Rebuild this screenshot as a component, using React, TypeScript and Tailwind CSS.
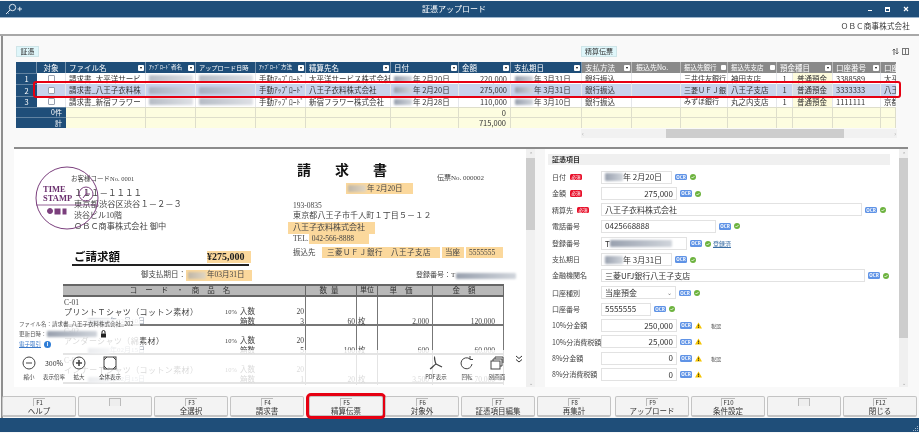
import React from "react";

const Red = ({ className = "" }: { className?: string }) => (
  <span className={`inline-block shrink-0 rounded-[1px] bg-gradient-to-r from-gray-400 to-gray-300 blur-[1.2px] ${className}`} />
);

const H = ({ t, gray, span, small }: { t: string; gray?: boolean; span?: boolean; small?: boolean }) => (
  <div className={`flex items-center justify-between pl-[3px] pr-[1px] border-r border-white/40 overflow-hidden whitespace-nowrap text-white ${gray ? "bg-[#8a8a8a]" : "bg-[#1f4e79]"} ${span ? "col-span-2" : ""} ${small ? "text-[5.5px]" : "text-[7.5px]"}`}>
    <span>{t}</span>
    <span className="shrink-0 w-[6px] h-[6px] bg-white rounded-[1px] flex items-center justify-center">
      <span className="w-0 h-0 border-x-[1.5px] border-x-transparent border-t-[2px] border-t-black" />
    </span>
  </div>
);

type Row = { n: string; file: string; name: string; d: string; amt: string; due: string; bank: string; br: string; ac: string; ex: string };
const rows: Row[] = [
  { n: "1", file: "請求書_太平洋サービ", name: "太平洋サービス株式会社", d: "年  2月20日", amt: "220,000", due: "年  3月31日", bank: "三井住友銀行", br: "神田支店", ac: "3388589", ex: "太平" },
  { n: "2", file: "請求書_八王子衣料株", name: "八王子衣料株式会社", d: "年  2月20日", amt: "275,000", due: "年  3月31日", bank: "三菱ＵＦＪ銀", br: "八王子支店", ac: "3333333", ex: "八王" },
  { n: "3", file: "請求書_新宿フラワー", name: "新宿フラワー株式会社", d: "年  2月28日", amt: "110,000", due: "年  3月10日", bank: "みずほ銀行", br: "丸之内支店", ac: "1111111", ex: "京都" },
];

function DataGrid() {
  const cell = "flex items-center px-[3px] overflow-hidden whitespace-nowrap text-[7.5px] text-[#333] border-r border-gray-200";
  return (
    <div className="ml-[13px] mt-[5px] w-[880px] grid grid-cols-[21px_29px_80px_50px_60px_50px_85px_68px_52px_71px_50px_49px_47px_49px_16px_40px_48px_15px] grid-rows-[11px_11px_12px_11px_10px_11px]">
      <div className="bg-[#1f4e79] border-r border-white/40" />
      <div className="bg-[#1f4e79] text-white text-[7.5px] flex items-center justify-center border-r border-white/40">対象</div>
      <H t="ファイル名" />
      <H t="ｱｯﾌﾟﾛｰﾄﾞ者名" small />
      <div className="flex items-center justify-between pl-[3px] pr-[1px] border-r border-white/40 overflow-hidden whitespace-nowrap text-white bg-[#1f4e79] text-[6.2px]">
        <span>アップロード日時</span>
      </div>
      <H t="ｱｯﾌﾟﾛｰﾄﾞ方法" small />
      <H t="精算先名" />
      <H t="日付" />
      <H t="金額" />
      <H t="支払期日" />
      <H t="支払方法" gray />
      <div className="bg-[#8a8a8a] text-white text-[7px] flex items-center pl-[4px] border-r border-white/40">振込先No.</div>
      <div className="bg-[#8a8a8a] text-white text-[6.5px] flex items-center justify-between pl-[3px] pr-[1px] border-r border-white/40 whitespace-nowrap overflow-hidden"><span>振込先銀行</span><span className="shrink-0 w-[5px] h-[5px] bg-white rounded-[1px]" /></div>
      <div className="bg-[#8a8a8a] text-white text-[6.5px] flex items-center justify-between pl-[3px] pr-[1px] border-r border-white/40 whitespace-nowrap overflow-hidden"><span>振込先支店</span><span className="shrink-0 w-[5px] h-[5px] bg-white rounded-[1px]" /></div>
      <H t="預金種目" gray span />
      <H t="口座番号" gray />
      <div className="bg-[#8a8a8a] text-white text-[7.5px] flex items-center pl-[3px] overflow-hidden whitespace-nowrap">口座</div>
      {rows.map((r) => {
        const sel = r.n === "2";
        const bg = sel ? "bg-[#c8d3ec]" : "bg-white";
        return (
          <React.Fragment key={r.n}>
            <div className="bg-[#1f4e79] text-white text-[7.5px] flex items-center justify-center border-t border-white/30">{r.n}</div>
            <div className={`${bg} flex items-center justify-center border-r border-gray-200`}>
              <span className="w-[7px] h-[7px] bg-white border border-gray-400 rounded-[1px]" />
            </div>
            <div className={`${cell} ${bg}`}>{r.file}</div>
            <div className={`${cell} ${bg}`}><Red className="w-[44px] h-[7px] opacity-70" /></div>
            <div className={`${cell} ${bg}`}><Red className="w-[54px] h-[7px] opacity-70" /></div>
            <div className={`${cell} ${bg} text-[6.5px]`}>手動ｱｯﾌﾟﾛｰﾄﾞ</div>
            <div className={`${cell} ${bg}`}>{r.name}</div>
            <div className={`${cell} ${bg}`}><Red className="w-[18px] h-[6px] mr-[1px]" />{r.d}</div>
            <div className={`${cell} ${bg} justify-end`}>{r.amt}</div>
            <div className={`${cell} ${bg}`}><Red className="w-[18px] h-[6px] ml-[1px] mr-[1px]" />{r.due}</div>
            <div className={`${cell} ${bg}`}>銀行振込</div>
            <div className={`${cell} ${bg}`} />
            <div className={`${cell} ${bg} px-[2px] text-[7px]`}>{r.bank}</div>
            <div className={`${cell} ${bg}`}>{r.br}</div>
            <div className={`${cell} ${bg} justify-center`}>1</div>
            <div className={`${cell} ${sel ? "bg-[#d5dbe4]" : "bg-[#fdfbdc]"} pl-[4px]`}>普通預金</div>
            <div className={`${cell} ${bg}`}>{r.ac}</div>
            <div className={`${cell} ${bg} border-r-0 px-[1px]`}>{r.ex}</div>
          </React.Fragment>
        );
      })}
      {[["0件", "0"], ["計", "715,000"]].map(([l, v]) => (
        <div key={l} className="contents">
          <div className="col-span-2 bg-[#1f4e79] text-white text-[7px] flex items-center justify-end pr-[4px] border-t border-white/30">{l}</div>
          {Array.from({ length: 16 }).map((_, i) => (
            <div key={i} className="bg-[#fdfde0] border-r border-t border-[#dedecb] text-[7.5px] text-[#333] flex items-center justify-end pr-[4px]">
              {i === 6 ? v : ""}
            </div>
          ))}
        </div>
      ))}
    </div>
  );
}

const Hl = ({ children, className = "" }: { children?: React.ReactNode; className?: string }) => (
  <div className={`flex items-center bg-[#fbd89c] whitespace-nowrap ${className}`}>{children}</div>
);

const mincho = "font-['Liberation_Serif','Noto_Sans_CJK_JP',serif]";

function TRow({ code, name, date, n1, n2, qty, price, amt }: { code: string; name: string; date: string; n1: string; n2: string; qty: string; price: string; amt: string }) {
  return (
    <div className="grid grid-cols-[242px_51px_21px_55px_72px] h-[29px] border-b-2 border-[#777] text-[7.5px] leading-[9.7px] text-[#444]">
      <div className="relative pl-[1px] pt-[1px] flex flex-col">
        <span>{code}</span>
        <span className="text-[8px] tracking-[0.4px] whitespace-nowrap">{name}</span>
        <span className="text-[7px] pl-[24px] text-gray-400 flex items-center"><Red className="w-[22px] h-[6px]" />{date}</span>
        <span className="absolute left-[162px] top-[10px] text-[6.5px]">10%</span>
        <span className="absolute left-[177px] top-[10px]">入数</span>
        <span className="absolute left-[177px] top-[19.5px]">箱数</span>
        <span className="absolute right-[1px] top-[10px]">{n1}</span>
        <span className="absolute right-[1px] top-[19.5px]">{n2}</span>
      </div>
      <div className="border-l border-[#777] flex items-end justify-end pr-[1px]">{qty}</div>
      <div className="border-l border-[#777] flex items-end pl-[1px]">枚</div>
      <div className="border-l border-[#777] flex items-end justify-end pr-[3px]">{price}</div>
      <div className="border-l border-[#777] border-r flex items-end justify-end pr-[8px]">{amt}</div>
    </div>
  );
}

const Icon = ({ children, w = 14 }: { children: React.ReactNode; w?: number }) => (
  <svg width={w} height={14} viewBox="0 0 14 14" fill="none" stroke="#444" strokeWidth="1">{children}</svg>
);

function Doc() {
  return (
    <div className={`relative bg-white w-[512px] h-[238px] overflow-hidden text-[#444] ${mincho}`}>
      {/* stamp */}
      <div className="absolute left-[21px] top-[16px] w-[66px] h-[66px]">
        <svg width="66" height="66" viewBox="0 0 66 66" fill="none" stroke="#7b3f7d">
          <circle cx="32" cy="33" r="31" strokeWidth="1" />
          <line x1="1" y1="40" x2="63" y2="40" strokeWidth="0.8" />
          <circle cx="51" cy="29" r="7" strokeWidth="1" />
          <path d="M51 24v5l-3 4M51 29h4" strokeWidth="1" />
          <circle cx="15" cy="46" r="2.5" fill="#7b3f7d" />
          <rect x="20" y="44" width="5" height="5" fill="#7b3f7d" />
          <rect x="28" y="44" width="3" height="5" fill="#7b3f7d" />
        </svg>
        <div className="absolute left-[8px] top-[20px] text-[8.5px] leading-[8.5px] font-bold text-[#6a2f6d] font-['Liberation_Serif',serif]">TIME<br />STAMP</div>
      </div>

      {/* address + title */}
      <div className="flex h-[135px] leading-none">
        <div className="w-[274px] pl-[60px] shrink-0">
          <div className="text-[6.5px] -ml-[3px] mt-[25px] h-[10px] leading-[10px] whitespace-nowrap">お客様コードNo. 0001</div>
          <div className="text-[8.5px] leading-[11px] mt-[4px] whitespace-nowrap">１１１－１１１１</div>
          <div className="text-[8.3px] leading-[11px] whitespace-nowrap">東京都渋谷区渋谷１－２－３</div>
          <div className="text-[8px] leading-[11px]">渋谷ビル10階</div>
          <div className="text-[8.2px] leading-[11px] whitespace-nowrap">ＯＢＣ商事株式会社 御中</div>
          <div className="flex items-center justify-between w-[177px] -ml-[2px] pl-[2px] mt-[18px] h-[16px] border-b-2 border-[#222]">
            <span className="text-[11.5px] font-bold text-[#111] font-['Noto_Sans_CJK_JP',sans-serif]">ご請求額</span>
            <Hl className="h-[12px] w-[44px] -mr-[2px] text-[10px] font-bold text-[#222]">¥275,000</Hl>
          </div>
          <div className="flex justify-end items-center h-[12px] mt-[3px] w-[178px] text-[7.5px]">
            <span className="whitespace-nowrap">御支払期日：</span>
            <Hl className="w-[66px] h-[11px] pl-[2px] shrink-0"><Red className="w-[18px] h-[7px] mr-[1px] opacity-60" />年03月31日</Hl>
          </div>
        </div>
        <div className="pl-[5px] flex-1">
          <div className="relative h-[34px]">
            <div className="absolute left-[4px] top-[13px] text-[14px] font-bold text-[#111] tracking-[24px] whitespace-nowrap font-['Noto_Sans_CJK_JP',sans-serif]">請求書</div>
            <div className="absolute left-[144px] top-[26px] text-[7px] whitespace-nowrap">伝票No. 000002</div>
          </div>
          <Hl className="ml-[53px] w-[67px] h-[11px] text-[7.5px] pl-[2px]"><Red className="w-[18px] h-[7px] mr-[1px] opacity-60" />年 2月20日</Hl>
          <div className="text-[7.5px] leading-[10px] mt-[7px]">193-0835</div>
          <div className="text-[8px] leading-[10px] tracking-[0.15px] whitespace-nowrap">東京都八王子市千人町１丁目５－１２</div>
          <Hl className="-ml-[5px] mt-[1px] w-[87px] h-[12px] text-[8px] pl-[5px]">八王子衣料株式会社</Hl>
          <div className="flex items-center h-[10px] text-[7.5px]">TEL.<Hl className="w-[60px] h-[10px] pl-[3px]">042-566-8888</Hl></div>
          <div className="flex items-center gap-[2px] h-[11px] mt-[3px] text-[7.5px] whitespace-nowrap">
            <span className="w-[27px]">振込先</span>
            <Hl className="w-[118px] h-[11px] pl-[5px] tracking-[0.5px]">三菱ＵＦＪ銀行　八王子支店</Hl>
            <Hl className="w-[22px] h-[11px] pl-[3px]">当座</Hl>
            <Hl className="w-[37px] h-[11px] pl-[3px]">5555555</Hl>
          </div>
          <div className="flex items-center h-[9px] mt-[13px] pl-[123px] text-[7px] whitespace-nowrap">登録番号：T<Red className="w-[60px] h-[6px] ml-[1px]" /></div>
        </div>
      </div>

      {/* table */}
      <div className="ml-[49px] w-[441px]">
        <div className="grid grid-cols-[242px_51px_21px_55px_72px] h-[13px] bg-[#b8b8b8] border-y-2 border-[#666] text-[7.5px] leading-none text-[#333]">
          <div className="flex items-center justify-center tracking-[8px] whitespace-nowrap">コード・商品名</div>
          <div className="flex items-center justify-center border-l border-[#666] tracking-[4px]">数量</div>
          <div className="flex items-center justify-center border-l border-[#666] text-[7px]">単位</div>
          <div className="flex items-center justify-center border-l border-[#666] tracking-[8px]">単価</div>
          <div className="flex items-center justify-center border-x border-[#666] tracking-[8px]">金額</div>
        </div>
        <TRow code="C-01" name="プリントＴシャツ（コットン素材）" date="年02月10日" n1="20" n2="3" qty="60" price="2,000" amt="120,000" />
        <TRow code="C-02" name="アンダーシャツ（綿素材）" date="年02月15日" n1="20" n2="5" qty="100" price="600" amt="60,000" />
        <TRow code="C-03" name="インナーＴシャツ（コットン素材）" date="年02月15日" n1="20" n2="1" qty="20" price="3,500" amt="70,000" />
      </div>

      {/* file info overlay */}
      <div className="absolute left-[2px] top-[170px] w-[124px] h-[31px] bg-white/80 font-['Noto_Sans_CJK_JP',sans-serif] text-[5.5px] text-[#555]">
        <div className="h-[10px] flex items-center whitespace-nowrap pl-[3px]">ファイル名：請求書_八王子衣料株式会社_202</div>
        <div className="h-[10px] flex items-center pl-[3px]">更新日時：<Red className="w-[50px] h-[6px]" />
          <svg width="7" height="8" viewBox="0 0 7 8" className="ml-[3px]"><rect x="1" y="3.5" width="5" height="4" fill="#222" /><path d="M2 3.5V2a1.5 1.5 0 013 0v1.500" fill="none" stroke="#222" /></svg>
        </div>
        <div className="h-[10px] flex items-center pl-[3px]"><span className="text-[#3a78c8] underline">電子取引</span>
          <span className="ml-[3px] w-[7px] h-[7px] rounded-full bg-[#2e7dd6] text-white text-[5.5px] leading-[7px] text-center font-bold">i</span>
        </div>
      </div>

      {/* viewer toolbar overlay */}
      <div className="absolute left-0 right-0 top-[201px] h-[37px] bg-white/80 flex items-start font-['Noto_Sans_CJK_JP',sans-serif] text-[5.5px] leading-[8px] text-[#444]">
        <div className="w-[30px] flex flex-col items-center pt-[6px]">
          <Icon><circle cx="7" cy="7" r="6" /><path d="M4 7h6" /></Icon>
          <span className="mt-[3px]">縮小</span>
        </div>
        <div className="w-[20px] flex flex-col items-center pt-[7px] whitespace-nowrap">
          <span className="text-[7px] leading-[12px] text-[#333]">300%</span>
          <span className="mt-[4px]">表示倍率</span>
        </div>
        <div className="w-[30px] flex flex-col items-center pt-[6px]">
          <Icon><circle cx="7" cy="7" r="6" /><path d="M4 7h6M7 4v6" strokeWidth="1.6" /></Icon>
          <span className="mt-[3px]">拡大</span>
        </div>
        <div className="w-[36px] -ml-[2px] flex flex-col items-center pt-[6px]">
          <Icon><rect x="1" y="1" width="12" height="12" /><path d="M1 4l3-3M10 1l3 3M1 10l3 3M13 10l-3 3" /></Icon>
          <span className="mt-[3px]">全体表示</span>
        </div>
        <div className="flex-1" />
        <div className="w-[32px] flex flex-col items-center pt-[6px]">
          <Icon><path d="M6 1c-1 0 0 5 1 7M1 13c2-1 4-4 6-5M13 11c-2-1-4-2-6-3" strokeWidth="1.3" /></Icon>
          <span className="mt-[3px] whitespace-nowrap">PDF表示</span>
        </div>
        <div className="w-[30px] flex flex-col items-center pt-[6px]">
          <Icon><path d="M12 8a5.500 5.500 0 11-2-5" /><path d="M10 0v3.500h3" /></Icon>
          <span className="mt-[3px]">回転</span>
        </div>
        <div className="w-[30px] flex flex-col items-center pt-[6px]">
          <Icon><rect x="1" y="5" width="9" height="8" /><path d="M3 5V3h9v7h-2M5 3V1h8v6" /></Icon>
          <span className="mt-[3px]">別画面</span>
        </div>
        <div className="w-[14px] pt-[5px] flex justify-center">
          <svg width="8" height="8" viewBox="0 0 8 8" fill="none" stroke="#333" strokeWidth="1"><path d="M1 1l3 2.500L7 1M1 4.500l3 2.500 3-2.500" /></svg>
        </div>
      </div>
    </div>
  );
}

const Scrollbar = ({ thumb }: { thumb: string }) => (
  <div className="w-[9px] h-full shrink-0 bg-[#f0f0f0] flex flex-col items-center">
    <span className="h-[9px] text-[5px] leading-[9px] text-[#999]">⌃</span>
    <div className={`w-full bg-[#cdcdcd] ${thumb}`} />
    <div className="flex-1" />
    <span className="h-[7px] text-[5px] leading-[5px] text-[#999]">⌄</span>
  </div>
);

const Ocr = () => (
  <span className="inline-flex items-center justify-center w-[12px] h-[6.500px] rounded-[1.500px] bg-[#5f93e6] text-white text-[4.5px] font-bold leading-none shrink-0">OCR</span>
);
const Ok = () => (
  <svg width="6" height="6" viewBox="0 0 6 6" className="shrink-0"><circle cx="3" cy="3" r="3" fill="#6db33f" /><path d="M1.500 3l1 1 2-2" stroke="#fff" strokeWidth="0.8" fill="none" /></svg>
);
const Warn = () => (
  <svg width="7" height="7" viewBox="0 0 7 7" className="shrink-0"><path d="M3.500 0.500L7 6.500H0z" fill="#f5c400" /><path d="M3.500 2.500v2M3.500 5v1" stroke="#222" strokeWidth="0.8" /></svg>
);
const Req = () => (
  <span className="inline-flex items-center justify-center w-[12px] h-[6.500px] rounded-[1.500px] bg-[#e8102a] text-white text-[4.5px] leading-none shrink-0">必須</span>
);

function F({ label, req, w, v, right, redact, tail, select, h = "h-[16.400px]", blurTail }: { label: string; req?: boolean; w: string; v?: string; right?: boolean; redact?: boolean; tail?: React.ReactNode; select?: boolean; h?: string; blurTail?: boolean }) {
  return (
    <div className={`flex items-center ${h}`}>
      <div className="w-[50px] shrink-0 flex items-center gap-[4px] text-[7px] text-[#444] whitespace-nowrap overflow-hidden pl-[1px]">
        <span>{label}</span>{req && <Req />}
      </div>
      <div className={`${w} h-[13px] shrink-0 border-[1.5px] border-[#e2e2e2] bg-white text-[8px] text-[#333] flex items-center whitespace-nowrap px-[3px] ${right ? "justify-end" : ""}`}>
        {redact && <Red className="w-[18px] h-[8px]" />}
        {v}
        {blurTail && <Red className="w-[62px] h-[7px]" />}
        {select && <span className="ml-auto text-[6px] text-[#777]">⌄</span>}
      </div>
      <div className="ml-[3px] flex items-center gap-[3px]">{tail ?? <><Ocr /><Ok /></>}</div>
    </div>
  );
}

function Form() {
  return (
    <div className="flex-1 px-[3px] pt-[5px] bg-white min-w-0">
      <div className="h-[11px] bg-[#f0f0f0] text-[7px] font-bold text-[#333] flex items-center pl-[4px] w-[342px]">証憑項目</div>
      <div className="mt-[4px] pl-[3px]">
        <F label="日付" req w="w-[71px]" redact v="年  2月20日" />
        <F label="金額" req w="w-[76px]" right v="275,000" />
        <F label="精算先" req w="w-[261px]" v="八王子衣料株式会社" />
        <F label="電話番号" w="w-[115px]" v="0425668888" />
        <F label="登録番号" w="w-[86px]" h="h-[18px]" v="T" blurTail tail={<><Ocr /><Ok /><span className="text-[6px] text-[#3a6ea5] underline whitespace-nowrap -ml-[1px]">登録済</span></>} />
        <F label="支払期日" w="w-[71px]" h="h-[14px]" redact v="年  3月31日" />
        <F label="金融機関名" w="w-[264px]" h="h-[18px]" v="三菱UFJ銀行八王子支店" />
        <F label="口座種別" w="w-[75px]" select v="当座預金" />
        <F label="口座番号" w="w-[50px]" v="5555555" />
        <F label="10%分金額" w="w-[76px]" right v="250,000" tail={<><Ocr /><Warn /><span className="ml-[6px] text-[5px] text-[#444]">税認</span></>} />
        <F label="10%分消費税額" w="w-[76px]" right v="25,000" tail={<><Ocr /><Warn /></>} />
        <F label="8%分金額" w="w-[76px]" right v="0" tail={<><Ocr /><Warn /><span className="ml-[6px] text-[5px] text-[#444]">税認</span></>} />
        <F label="8%分消費税額" w="w-[76px]" right v="0" tail={<><Ocr /><Warn /></>} />
      </div>
    </div>
  );
}

function Key({ k, t, hot }: { k?: string; t?: string; hot?: boolean }) {
  return (
    <div className="relative w-[74px] h-[21px] shrink-0 bg-[#f3f3f3] border border-[#c4c4c4] border-b-2 rounded-[2px] flex flex-col items-center text-[#333]">
      <span className={`h-[8px] mt-[1px] text-[6px] leading-[8px] px-[2px] border-l border-t border-[#bbb] ${k ? "" : "w-[12px] bg-[#eee] border-r"}`}>{k}</span>
      <span className="text-[7.5px] leading-[10px]">{t}</span>
      {hot && <span className="absolute -inset-[4px] border-[3px] border-[#e60012] rounded-[5px]" />}
    </div>
  );
}

export default function App() {
  return (
    <div className="relative w-[919px] h-[433px] overflow-hidden bg-[#f7f7f7] flex flex-col blur-[0.35px] font-['Noto_Sans_CJK_JP','Noto_Sans',sans-serif]">
      {/* title bar */}
      <div className="mt-[1px] h-[17px] shrink-0 bg-[#1f4e79] border-b border-[#9db5cc] flex items-center text-white pl-[5px] pr-[10px]">
        <svg width="18" height="12" viewBox="0 0 18 12" fill="none" stroke="#dfe8f0" strokeWidth="1">
          <circle cx="7.500" cy="4.500" r="3.200" />
          <path d="M5 7l-4 4M2.500 9.500l1 1" />
          <path d="M12.500 6h4.500M14.750 3.800v4.400" />
        </svg>
        <div className="flex-1 text-center text-[8px] pl-[17px]">証憑アップロード</div>
        <div className="flex items-center gap-[13px]">
          <span className="w-[4px] h-[1.500px] bg-white mt-[3px]" />
          <span className="w-[5px] h-[5px] border border-white border-t-2" />
          <svg width="6" height="6" viewBox="0 0 6 6" stroke="#fff" strokeWidth="1.200"><path d="M1 1l4 4M5 1l-4 4" /></svg>
        </div>
      </div>
      {/* company */}
      <div className="h-[18px] shrink-0 bg-white border-b-2 border-[#a8a8a8] flex items-center justify-end pr-[9px] text-[7.5px] text-[#333] tracking-[0.2px]">ＯＢＣ商事株式会社</div>

      {/* main */}
      <div className="flex-1 min-h-0 border-l-2 border-[#8f8f8f] ml-[1px] flex flex-col bg-[#f9f9f9]">
        <div className="mt-[10px] flex items-center h-[11px]">
          <span className="ml-[13px] w-[23px] h-[11px] bg-[#dff6fa] border border-[#cfe5e8] text-[7px] text-[#333] flex items-center justify-center">証憑</span>
          <span className="ml-[542px] w-[36px] h-[11px] bg-[#dff6fa] border border-[#cfe5e8] text-[7px] text-[#333] flex items-center justify-center">精算伝票</span>
          <div className="ml-auto mr-[10px] flex items-center gap-[3px]">
            <svg width="7" height="7" viewBox="0 0 7 7" fill="none" stroke="#555" strokeWidth="0.900"><path d="M2 7V1L0.500 2.500M2 1l1.500 1.500M5 0v6L3.500 4.500M5 6l1.500-1.500" /></svg>
            <span className="w-[7px] h-[7px] border border-[#777] flex justify-center"><span className="w-px h-full bg-[#777]" /></span>
          </div>
        </div>
        <DataGrid />
        {/* h scrollbar */}
        <div className="ml-[578px] mt-[1px] w-[316px] h-[9px] bg-[#f1f1f1] flex items-center text-[6px] text-[#aaa] shrink-0">
          <span className="w-[5px] pl-[1px]">‹</span>
          <div className="ml-[80px] w-[178px] h-full bg-[#cdcdcd]" />
          <span className="ml-auto pr-[1px]">›</span>
        </div>

        {/* panels */}
        <div className="mt-[9px] ml-[11px] w-[894px] h-[240px] border-t-2 border-[#8c8c8c] flex shrink-0">
          <Doc />
          <Scrollbar thumb="h-[72px]" />
          <div className="w-[10px] shrink-0 bg-[#f6f6f6]" />
          <Form />
          <Scrollbar thumb="h-[180px]" />
        </div>

        {/* function keys */}
        <div className="mt-[9px] -ml-[1px] flex gap-[5px] shrink-0 h-[21px]">
          <div className="flex gap-[2px]"><Key k="F1" t="ヘルプ" /><Key /><Key k="F3" t="全選択" /><Key k="F4" t="請求書" /></div>
          <div className="flex gap-[2px]"><Key k="F5" t="精算伝票" hot /><Key k="F6" t="対象外" /><Key k="F7" t="証憑項目編集" /><Key k="F8" t="再集計" /></div>
          <div className="flex gap-[2px] -ml-[1px]"><Key k="F9" t="アップロード" /><Key k="F10" t="条件設定" /><Key /><Key k="F12" t="閉じる" /></div>
        </div>
      </div>

      {/* status bar */}
      <div className="h-[14px] shrink-0 mb-[1px] bg-[#1f4e79] flex items-end justify-end">
        <svg width="6" height="6" viewBox="0 0 6 6" fill="#9fb4c8"><rect x="4" y="0" width="1" height="1" /><rect x="2" y="2" width="1" height="1" /><rect x="4" y="2" width="1" height="1" /><rect x="0" y="4" width="1" height="1" /><rect x="2" y="4" width="1" height="1" /><rect x="4" y="4" width="1" height="1" /></svg>
      </div>

      {/* red row highlight */}
      <div className="absolute left-[33px] top-[81px] w-[868px] h-[17px] border-[2.500px] border-[#e60012] rounded-[3px]" />
    </div>
  );
}
